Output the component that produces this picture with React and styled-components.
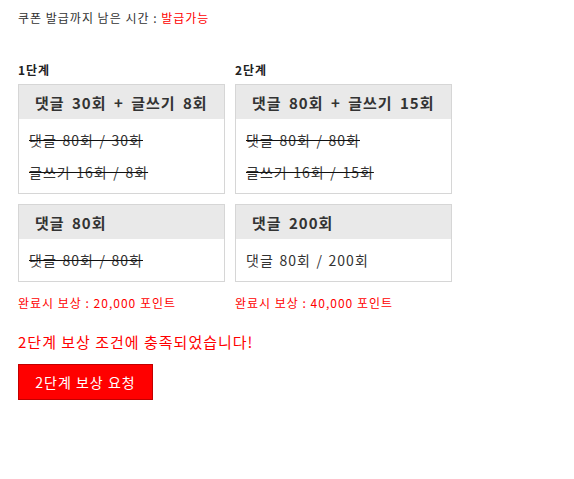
import React from "react";
import styled, { createGlobalStyle } from "styled-components";

const Global = createGlobalStyle`
  html, body { margin: 0; padding: 0; background: #fff; }
  body { font-family: "Noto Sans CJK KR", "Noto Sans", sans-serif; color: #333; letter-spacing: 1px; }
`;

const Page = styled.div`
  padding: 10px 18px 20px 18px;
`;

const TimeLine = styled.div`
  font-size: 12px;
  line-height: 16px;
  color: #333;
`;

const Red = styled.span`
  color: #ff0000;
`;

const Columns = styled.div`
  display: flex;
  gap: 10px;
  margin-top: 36px;
  align-items: flex-start;
`;

const Column = styled.div`
  width: ${(p) => p.$width}px;
  display: flex;
  flex-direction: column;
`;

const StepLabel = styled.div`
  font-size: 12px;
  line-height: 16px;
  font-weight: 700;
  color: #222;
  margin-bottom: 6px;
`;

const Box = styled.div`
  border: 1px solid #d6d6d6;
  background: #fff;
  & + & {
    margin-top: 10px;
  }
`;

const BoxHeader = styled.div`
  background: #e9e9e9;
  height: 34px;
  display: flex;
  align-items: center;
  padding: 0 10px 0 16px;
  font-size: 15px;
  font-weight: 700;
  color: #333;
  white-space: nowrap;
  word-spacing: 3px;
`;

const BoxBody = styled.div`
  padding: 5px 10px;
`;

const Progress = styled.div`
  font-size: 14px;
  line-height: 32px;
  color: #333;
  white-space: nowrap;
  word-spacing: 1.5px;
  text-decoration: ${(p) => (p.$done ? "line-through" : "none")};
  text-decoration-color: #111;
`;

const Reward = styled.div`
  margin-top: 13px;
  font-size: 12px;
  line-height: 16px;
  color: #ff0000;
`;

const Message = styled.div`
  margin-top: 21px;
  font-size: 15px;
  line-height: 20px;
  color: #ff0000;
`;

const RequestButton = styled.button`
  margin-top: 12px;
  width: 135px;
  height: 36px;
  background: #ff0000;
  border: 1px solid #c20000;
  color: #fff;
  font-family: inherit;
  letter-spacing: 1px;
  font-size: 14px;
  padding: 0;
  cursor: pointer;
`;

const steps = [
  {
    label: "1단계",
    width: 207,
    reward: "완료시 보상 : 20,000 포인트",
    boxes: [
      {
        title: "댓글 30회 + 글쓰기 8회",
        items: [
          { text: "댓글 80회 / 30회", done: true },
          { text: "글쓰기 16회 / 8회", done: true },
        ],
      },
      {
        title: "댓글 80회",
        items: [{ text: "댓글 80회 / 80회", done: true }],
      },
    ],
  },
  {
    label: "2단계",
    width: 217,
    reward: "완료시 보상 : 40,000 포인트",
    boxes: [
      {
        title: "댓글 80회 + 글쓰기 15회",
        items: [
          { text: "댓글 80회 / 80회", done: true },
          { text: "글쓰기 16회 / 15회", done: true },
        ],
      },
      {
        title: "댓글 200회",
        items: [{ text: "댓글 80회 / 200회", done: false }],
      },
    ],
  },
];

export default function App() {
  return (
    <>
      <Global />
      <Page>
        <TimeLine>
          쿠폰 발급까지 남은 시간 : <Red>발급가능</Red>
        </TimeLine>
        <Columns>
          {steps.map((s) => (
            <Column key={s.label} $width={s.width}>
              <StepLabel>{s.label}</StepLabel>
              {s.boxes.map((b) => (
                <Box key={b.title}>
                  <BoxHeader>{b.title}</BoxHeader>
                  <BoxBody>
                    {b.items.map((it) => (
                      <Progress key={it.text} $done={it.done}>
                        {it.text}
                      </Progress>
                    ))}
                  </BoxBody>
                </Box>
              ))}
              <Reward>{s.reward}</Reward>
            </Column>
          ))}
        </Columns>
        <Message>2단계 보상 조건에 충족되었습니다!</Message>
        <RequestButton>2단계 보상 요청</RequestButton>
      </Page>
    </>
  );
}
